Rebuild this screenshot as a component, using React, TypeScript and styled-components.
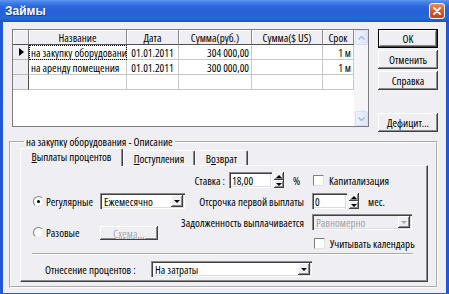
import React from 'react'
import styled, { createGlobalStyle, css } from 'styled-components'

const face = '#efeef3'
const font = `'Open Sans', Roboto, 'Liberation Sans', Arial, sans-serif`

const GlobalStyle = createGlobalStyle`
  html, body {
    margin: 0;
    padding: 0;
    background: #fff;
  }
  body {
    font-family: ${font};
    font-size: 11px;
    font-stretch: 77%;
    color: #000;
  }
  * {
    box-sizing: border-box;
  }
`

const raised = css`
  background: ${face};
  box-shadow: inset -1px -1px #404040, inset 1px 1px #fff, inset -2px -2px #8a8a8a;
`

const sunken = css`
  box-shadow: inset 1px 1px #8a8a8a, inset 2px 2px #404040, inset -1px -1px #fff, inset -2px -2px #dcdcdc;
`

type Column = { title: string; w: number; align?: 'left' | 'right' | 'center' }

const columns: Column[] = [
  { title: '', w: 16 },
  { title: 'Название', w: 98 },
  { title: 'Дата', w: 52, align: 'center' },
  { title: 'Сумма(руб.)', w: 73, align: 'right' },
  { title: 'Сумма($ US)', w: 71, align: 'right' },
  { title: 'Срок', w: 31, align: 'right' },
]

const rows = [
  { cells: ['на закупку оборудования', '01.01.2011', '304 000,00', '', '1 м'], current: true },
  { cells: ['на аренду помещения', '01.01.2011', '300 000,00', '', '1 м'] },
  { cells: ['', '', '', '', ''] },
]

const App: React.FC = () => {
  return (
    <>
      <GlobalStyle />
      <Window>
        <TitleBar>
          <Title>Займы</Title>
          <CloseButton>
            <svg width="8" height="8" viewBox="0 0 8 8">
              <path d="M1 1 L7 7 M7 1 L1 7" stroke="#fff" strokeWidth="1.8" strokeLinecap="round" />
            </svg>
          </CloseButton>
        </TitleBar>
        <Client>
          <TopSection>
            <GridFrame>
              <Table>
                {columns.map((c, i) => (
                  <HeadCell key={i}>{c.title}</HeadCell>
                ))}
                {rows.map((r, ri) => (
                  <React.Fragment key={ri}>
                    <Indicator>{r.current && <Pointer />}</Indicator>
                    {r.cells.map((text, ci) => (
                      <Cell key={ci} $align={columns[ci + 1].align} $focus={r.current && ci === 0}>
                        {text}
                      </Cell>
                    ))}
                  </React.Fragment>
                ))}
              </Table>
              <ScrollBar>
                <ScrollButton>
                  <svg width="7" height="4" viewBox="0 0 7 4">
                    <path d="M0.5 3.5 L3.5 0.5 L6.5 3.5" fill="none" stroke="#9fb2e2" strokeWidth="1.2" />
                  </svg>
                </ScrollButton>
                <ScrollTrack />
                <ScrollButton>
                  <svg width="7" height="4" viewBox="0 0 7 4">
                    <path d="M0.5 0.5 L3.5 3.5 L6.5 0.5" fill="none" stroke="#9fb2e2" strokeWidth="1.2" />
                  </svg>
                </ScrollButton>
              </ScrollBar>
            </GridFrame>
            <ButtonColumn>
              <Button $default>OK</Button>
              <Button>Отменить</Button>
              <Button>Справка</Button>
              <Button $gap={21}>Дефицит...</Button>
            </ButtonColumn>
          </TopSection>

          <GroupBox>
            <Legend>на закупку оборудования - Описание</Legend>
            <TabStrip>
              <Tab $w={103} $active>
                <u>В</u>ыплаты процентов
              </Tab>
              <Tab $w={72}>
                <u>П</u>оступления
              </Tab>
              <Tab $w={53}>
                В<u>о</u>зврат
              </Tab>
            </TabStrip>
            <TabPanel>
              <FormGrid>
                <LabelCell $col={2} $row="1">
                  <Label>Ставка :</Label>
                  <SpinEdit>
                    <Field $w={43}>18,00</Field>
                    <Spinner />
                  </SpinEdit>
                  <Unit $w={24}>%</Unit>
                </LabelCell>
                <ControlCell $col={3} $row="1">
                  <CheckBox />
                  <Label>Капитализация</Label>
                </ControlCell>

                <ControlCell $col={1} $row="2">
                  <Radio $checked />
                  <RadioLabel>Регулярные</RadioLabel>
                  <Combo $w={85} value="Ежемесячно" />
                </ControlCell>
                <LabelCell $col={2} $row="2">
                  <Label>Отсрочка первой выплаты</Label>
                </LabelCell>
                <ControlCell $col={3} $row="2">
                  <SpinEdit>
                    <Field $w={35}>0</Field>
                    <Spinner />
                  </SpinEdit>
                  <Unit $w={30}>мес.</Unit>
                </ControlCell>

                <LabelCell $col={2} $row="3">
                  <Label>Задолженность выплачивается</Label>
                </LabelCell>
                <ControlCell $col={3} $row="3">
                  <Combo $w={100} value="Равномерно" disabled />
                </ControlCell>

                <ControlCell $col={1} $row="3 / span 2">
                  <Radio />
                  <RadioLabel>Разовые</RadioLabel>
                  <Button $w={58} $h={14} disabled>
                    Схема...
                  </Button>
                </ControlCell>
                <ControlCell $col={3} $row="4">
                  <CheckBox $indent={2} />
                  <Label>Учитывать календарь</Label>
                </ControlCell>
              </FormGrid>
              <Separator />
              <BottomRow>
                <BottomLabel>Отнесение процентов :</BottomLabel>
                <Combo $w={161} value="На затраты" />
              </BottomRow>
            </TabPanel>
          </GroupBox>
        </Client>
      </Window>
    </>
  )
}

export default App

type ComboProps = { $w: number; value: string; disabled?: boolean }

const Combo: React.FC<ComboProps> = ({ $w, value, disabled }) => (
  <ComboBox $w={$w} $disabled={disabled}>
    <ComboText>{value}</ComboText>
    <DropButton>
      <DownArrow $color={disabled ? '#a8a8a8' : '#000'} />
    </DropButton>
  </ComboBox>
)

const Spinner: React.FC = () => (
  <SpinButtons>
    <SpinHalf>
      <UpArrow />
    </SpinHalf>
    <SpinHalf>
      <DownArrow />
    </SpinHalf>
  </SpinButtons>
)

const Window = styled.div`
  width: 449px;
  height: 294px;
  display: flex;
  flex-direction: column;
  background: #2258d8;
  overflow: hidden;
`

const TitleBar = styled.div`
  height: 22px;
  flex: none;
  display: flex;
  align-items: center;
  padding: 0 4px 1px 5px;
  background: linear-gradient(
    to bottom,
    #5f97f2 0%,
    #3f7fea 12%,
    #2a68dc 30%,
    #2460d6 60%,
    #2a66dc 82%,
    #1d52c8 100%
  );
`

const Title = styled.span`
  flex: 1;
  color: #fff;
  font: bold 12px 'Liberation Sans', Arial, sans-serif;
  text-shadow: 1px 1px #123c9c;
`

const CloseButton = styled.div`
  width: 16px;
  height: 16px;
  display: flex;
  align-items: center;
  justify-content: center;
  border: 1px solid #fff;
  border-radius: 3px;
  background: linear-gradient(to bottom, #ee8b66, #de5a2e 45%, #c9431c);
`

const Client = styled.div`
  flex: 1;
  margin: 0 3px 3px;
  padding: 7px 8px 5px 6px;
  background: ${face};
  display: flex;
  flex-direction: column;
`

const TopSection = styled.div`
  display: flex;
  align-items: flex-start;
  gap: 9px;
  padding-left: 3px;
`

const GridFrame = styled.div`
  width: 357px;
  height: 98px;
  flex: none;
  display: flex;
  border: 1px solid #7c7c7c;
  background: #fff;
`

const Table = styled.div`
  width: 341px;
  display: grid;
  grid-template-columns: ${columns.map(c => `${c.w}px`).join(' ')};
  grid-auto-rows: 15px;
  align-content: start;
`

const HeadCell = styled.div`
  display: flex;
  align-items: center;
  justify-content: center;
  white-space: nowrap;
  overflow: hidden;
  background: ${face};
  border-right: 1px solid #8a8a8a;
  border-bottom: 1px solid #505050;
  box-shadow: inset 1px 1px #fff;
`

const Indicator = styled.div`
  display: flex;
  align-items: center;
  padding-left: 6px;
  background: ${face};
  border-right: 1px solid #505050;
  border-bottom: 1px solid #b8b8b8;
`

const Pointer = styled.span`
  width: 0;
  height: 0;
  border-top: 4px solid transparent;
  border-bottom: 4px solid transparent;
  border-left: 5px solid #000;
`

const Cell = styled.div<{ $align?: string; $focus?: boolean }>`
  display: flex;
  align-items: center;
  justify-content: ${p => (p.$align === 'right' ? 'flex-end' : p.$align === 'center' ? 'center' : 'flex-start')};
  padding: 0 2px;
  white-space: nowrap;
  overflow: hidden;
  border-right: 1px solid #c8c8c8;
  border-bottom: 1px solid #c8c8c8;
  ${p =>
    p.$focus &&
    css`
      outline: 1px dotted #000;
      outline-offset: -1px;
    `}
`

const ScrollBar = styled.div`
  width: 14px;
  display: flex;
  flex-direction: column;
  background: #f5f5f8;
`

const ScrollButton = styled.div`
  height: 15px;
  display: flex;
  align-items: center;
  justify-content: center;
  margin: 0 0 0 1px;
  border: 1px solid #d6def4;
  border-radius: 2px;
  background: linear-gradient(to right, #eef2fc, #dfe6f8);
`

const ScrollTrack = styled.div`
  flex: 1;
`

const ButtonColumn = styled.div`
  width: 60px;
  display: flex;
  flex-direction: column;
  gap: 2px;
`

const Button = styled.button<{ $default?: boolean; $gap?: number; $w?: number; $h?: number }>`
  appearance: none;
  width: ${p => (p.$w ? `${p.$w}px` : '100%')};
  height: ${p => p.$h || 19}px;
  margin: ${p => p.$gap || 0}px 0 0;
  padding: 0;
  flex: none;
  font-family: ${font};
  font-size: 11px;
  font-stretch: 77%;
  color: #000;
  border: ${p => (p.$default ? '1px solid #000' : 'none')};
  ${raised};

  &:disabled {
    color: #a4a4a4;
    text-shadow: 1px 1px #fff;
  }
`

const GroupBox = styled.fieldset`
  margin: 3px 0 0;
  padding: 0 8px 4px 9px;
  min-width: 0;
  border: 2px groove #fff;
`

const Legend = styled.legend`
  margin-left: 4px;
  padding: 0 2px;
  line-height: 13px;
`

const TabStrip = styled.div`
  height: 17px;
  display: flex;
  align-items: flex-end;
  position: relative;
  z-index: 1;
`

const Tab = styled.div<{ $w: number; $active?: boolean }>`
  width: ${p => p.$w}px;
  height: ${p => (p.$active ? 18 : 15)}px;
  margin-bottom: ${p => (p.$active ? -1 : 0)}px;
  padding-bottom: ${p => (p.$active ? 2 : 0)}px;
  display: flex;
  align-items: center;
  justify-content: center;
  white-space: nowrap;
  background: ${face};
  border-top: 1px solid #fff;
  border-left: 1px solid #fff;
  border-right: 1px solid #404040;
  border-radius: 2px 2px 0 0;
  box-shadow: inset -1px 0 #8a8a8a;
`

const TabPanel = styled.div`
  padding: 6px 15px 4px 12px;
  border: 1px solid;
  border-color: #fff #404040 #404040 #fff;
  box-shadow: inset -1px -1px #8a8a8a;
`

const FormGrid = styled.div`
  display: grid;
  grid-template-columns: 145px 134px 100px;
  grid-template-rows: repeat(4, 16px);
  row-gap: 5px;
`

const FormCell = styled.div<{ $col: number; $row: string }>`
  grid-column: ${p => p.$col};
  grid-row: ${p => p.$row};
  display: flex;
  align-items: center;
  white-space: nowrap;
  min-width: 0;
`

const LabelCell = styled(FormCell)`
  justify-content: flex-end;
  padding-right: 4px;
`

const ControlCell = styled(FormCell)`
  justify-content: flex-start;
`

const Label = styled.span`
  white-space: nowrap;
  margin-right: 4px;
`

const RadioLabel = styled.span`
  width: 54px;
  flex: none;
`

const Unit = styled.span<{ $w: number }>`
  width: ${p => p.$w}px;
  padding-left: 9px;
  flex: none;
`

const SpinEdit = styled.div`
  display: flex;
  gap: 2px;
  flex: none;
`

const Field = styled.div<{ $w: number }>`
  width: ${p => p.$w}px;
  height: 16px;
  display: flex;
  align-items: center;
  padding: 0 3px;
  background: #fff;
  ${sunken};
`

const SpinButtons = styled.div`
  width: 10px;
  height: 16px;
  display: flex;
  flex-direction: column;
`

const SpinHalf = styled.div`
  flex: 1;
  display: flex;
  align-items: center;
  justify-content: center;
  ${raised};
`

const DownArrow = styled.span<{ $color?: string }>`
  width: 0;
  height: 0;
  border-left: 3px solid transparent;
  border-right: 3px solid transparent;
  border-top: 3px solid ${p => p.$color || '#000'};
`

const UpArrow = styled.span`
  width: 0;
  height: 0;
  border-left: 3px solid transparent;
  border-right: 3px solid transparent;
  border-bottom: 3px solid #000;
`

const ComboBox = styled.div<{ $w: number; $disabled?: boolean }>`
  width: ${p => p.$w}px;
  height: 16px;
  flex: none;
  display: flex;
  align-items: center;
  padding: 2px;
  background: ${p => (p.$disabled ? face : '#fff')};
  color: ${p => (p.$disabled ? '#a4a4a4' : '#000')};
  ${sunken};
`

const ComboText = styled.span`
  flex: 1;
  padding-left: 2px;
  white-space: nowrap;
  overflow: hidden;
`

const DropButton = styled.div`
  width: 12px;
  height: 12px;
  display: flex;
  align-items: center;
  justify-content: center;
  ${raised};
`

const Radio = styled.span<{ $checked?: boolean }>`
  width: 11px;
  height: 11px;
  flex: none;
  margin-right: 2px;
  display: flex;
  align-items: center;
  justify-content: center;
  border-radius: 50%;
  background: #fff;
  border: 1px solid;
  border-color: #808080 #e4e4e4 #e4e4e4 #808080;

  &::after {
    content: '';
    width: 3px;
    height: 3px;
    border-radius: 50%;
    background: #000;
    display: ${p => (p.$checked ? 'block' : 'none')};
  }
`

const CheckBox = styled.span<{ $indent?: number }>`
  width: 11px;
  height: 11px;
  flex: none;
  margin: 0 5px 0 ${p => p.$indent || 1}px;
  background: #fff;
  border: 1px solid;
  border-color: #808080 #e4e4e4 #e4e4e4 #808080;
`

const Separator = styled.div`
  margin: 2px -1px 0;
  border-top: 1px solid #a8a8a8;
  border-bottom: 1px solid #fff;
`

const BottomRow = styled.div`
  display: flex;
  align-items: center;
  margin-top: 6px;
  padding-left: 12px;
`

const BottomLabel = styled.span`
  width: 106px;
  flex: none;
  white-space: nowrap;
`
